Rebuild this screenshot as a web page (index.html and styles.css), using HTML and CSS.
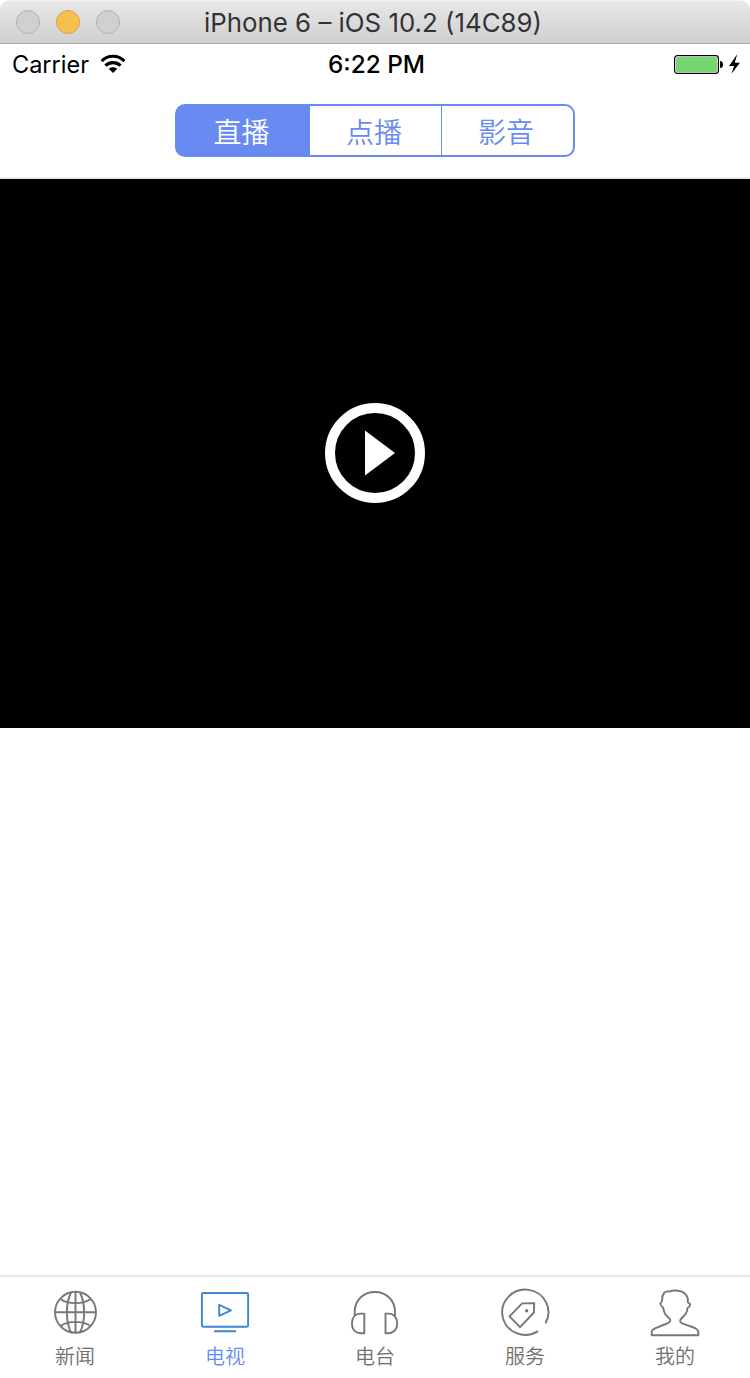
FILE: index.html
```html
<!DOCTYPE html>
<html lang="zh-CN">
<head>
<meta charset="utf-8">
<title>iPhone 6</title>
<link rel="stylesheet" href="styles.css">
</head>
<body>
<div class="window">
  <header class="titlebar">
    <div class="lights"><i class="light"></i><i class="light light-min"></i><i class="light"></i></div>
    <svg class="title" width="340" height="42"><text x="0" y="32" textLength="338" lengthAdjust="spacingAndGlyphs">iPhone 6 – iOS 10.2 (14C89)</text></svg>
  </header>
  <div class="status">
    <div class="carrier">
      <svg class="carrier-name" width="78" height="36"><text x="0" y="29" textLength="77" lengthAdjust="spacingAndGlyphs">Carrier</text></svg>
      <svg width="26" height="20" viewBox="0 0 26 20"><g fill="none" stroke="#000" stroke-width="3.1"><path d="M1.6 7.1C8 .7 18 .7 24.4 7.1"/><path d="M5.4 11.6C9.6 7.6 16.4 7.6 20.6 11.6"/></g><path d="M8.7 14.8C11.2 12.6 14.8 12.6 17.3 14.8L13 19Z"/></svg>
    </div>
    <svg class="clock" width="98" height="36"><text x="0" y="29" textLength="97" lengthAdjust="spacingAndGlyphs">6:22 PM</text></svg>
    <svg class="battery" width="68" height="22" viewBox="0 0 68 22"><rect x=".6" y="1.6" width="43.8" height="17.8" rx="2.8" fill="#fff" stroke="#000" stroke-width="1.2"/><rect x="2" y="3" width="41" height="15" rx="1.5" fill="#76d672"/><path d="M46 7Q49 7 49 10.5T46 14Z"/><path d="M63.2 .3L55 12H60L57.5 19.8L66 8.8H60.8Z"/></svg>
  </div>
  <nav class="navbar">
    <div class="segments"><span class="segment active">直播</span><span class="segment">点播</span><span class="segment">影音</span></div>
  </nav>
  <main class="content">
    <div class="player"><svg width="100" height="100"><circle cx="50" cy="50" r="45" fill="none" stroke="#fff" stroke-width="10"/><path d="M40 27.5L70 50L40 72.5Z" fill="#fff"/></svg></div>
  </main>
  <footer class="tabs">
    <div class="tab"><svg class="icon" viewBox="0 0 90 60"><circle cx="45.5" cy="32.3" r="20.5"/><path d="M25 32.3H66M45.5 12V53M41 12.5C35.5 24 35.5 41 41 52.5M50 12.5C55.5 24 55.5 41 50 52.5M30.5 19C38 24.5 53 24.5 60.5 19M30.5 46C38 40.5 53 40.5 60.5 46"/></svg><span>新闻</span></div>
    <div class="tab selected"><svg class="icon" viewBox="0 0 90 60"><rect x="21.9" y="13" width="46.2" height="33.7" rx="1.2"/><path d="M34 51.3H56M39.2 24.8V35.8L51 30.3Z"/></svg><span>电视</span></div>
    <div class="tab"><svg class="icon" viewBox="0 0 90 60"><path d="M24.7 35.5V32C24.7 20 33.5 12 44.8 12S65 20 65 32V35.5M34.3 33.6V53.2H31C25 53.2 21.9 49 21.9 43.4S25 33.6 31 33.6ZM55.5 33.6V53.2H58.5C64 53.2 67.2 49 67.2 43.4S64 33.6 58.5 33.6Z"/></svg><span>电台</span></div>
    <div class="tab"><svg class="icon" viewBox="0 0 90 60"><path d="M65.8 42.7A23.1 22.6 0 1 0 58.3 50.6" transform="translate(-.3 .5)"/><path d="M42.2 23.4L54.2 23.1L53.9 32.5L40.1 47.2L29.5 36.3Z"/><circle class="dot" cx="46.7" cy="30.7" r="1.7"/></svg><span>服务</span></div>
    <div class="tab"><svg class="icon" viewBox="0 0 90 60"><path d="M21.7 55.2V51.5Q22.2 49.5 25 48.3L37 43.5Q40.2 42 40.3 40.2Q40.1 39 38.3 37.6Q34.5 34.5 34 31.2Q33.4 28 32.5 27Q30.1 25.3 30.3 23.2Q32.2 22 32.1 20.2Q31.9 15.7 34.3 12.7Q36 10.8 39.5 11.6Q44 9.5 51 11.3Q56 13 57.5 17.5Q58.1 20 57.8 22.3L60.3 24.2Q60 26.7 57.5 28Q57.4 33.5 51.3 38.5Q49.6 40.3 50.3 42Q51.4 43.3 55 44.4L65 48Q68 49.6 68.3 51.5V55.2Z"/></svg><span>我的</span></div>
  </footer>
</div>
</body>
</html>
```
FILE: styles.css
```css
* { box-sizing: border-box; }
body { margin: 0; background: #fff; font-family: Inter, "Noto Sans CJK SC", sans-serif; }
.window { width: 750px; height: 1378px; display: flex; flex-direction: column; border-radius: 9px 9px 0 0; overflow: hidden; }
.titlebar { height: 44px; flex: none; display: grid; grid-template-columns: 204px 340px 1fr; background: linear-gradient(#e8e8e8, #cfcfcf); border-top: 1px solid #f2f2f2; border-bottom: 1px solid #aaa; border-radius: 9px 9px 0 0; }
.lights { display: flex; gap: 16px; padding: 9px 0 0 16px; }
.light { width: 24px; height: 24px; border-radius: 50%; background: #d0d0d0; border: 1px solid #b1b1b1; }
.light-min { background: #f6c04f; border-color: #dba047; }
.title { font-size: 26px; fill: #333; margin-top: -1px; }
.status { height: 44px; flex: none; display: grid; grid-template-columns: 328px 346px 1fr; }
.carrier { display: flex; gap: 10px; padding-left: 12px; }
.carrier > svg:last-child { margin-top: 10px; }
.carrier-name { font-size: 24px; }
.clock { font-size: 24px; font-weight: 500; }
.battery { margin-top: 10px; }
.navbar { height: 91px; flex: none; padding-top: 16px; border-bottom: 2px solid #e6e6e6; }
.segments { width: 400px; height: 53px; margin: 0 auto; display: grid; grid-template-columns: 132px 132px 1fr; border: 2px solid #678bf0; border-radius: 10px; background: linear-gradient(to right, #678bf0 135px, #fff 0) border-box; }
.segment { padding-right: 3px; display: flex; align-items: center; justify-content: center; color: #678bf0; font-family: "Noto Sans CJK SC", sans-serif; font-size: 28px; font-weight: 350; line-height: 48px; }
.segment + .segment { border-left: 1px solid #678bf0; }
.segment.active { color: #fff; }
.content { flex: 1; }
.player { height: 549px; padding-bottom: 1px; background: #000; display: flex; align-items: center; justify-content: center; }
.tabs { height: 103px; flex: none; border-top: 2px solid #e6e6e6; display: grid; grid-template-columns: repeat(5, 150px); }
.tab { display: flex; flex-direction: column; align-items: center; padding-top: 3px; color: #707070; font-family: "Noto Sans CJK SC", sans-serif; font-size: 20px; font-weight: 350; line-height: 32px; }
.icon { width: 90px; height: 60px; flex: none; fill: none; stroke: #777; stroke-width: 1.9; stroke-linejoin: round; }
.selected { color: #678bf0; }
.selected .icon { stroke: #3e88d1; }
.dot { fill: #777; stroke: none; }
```
